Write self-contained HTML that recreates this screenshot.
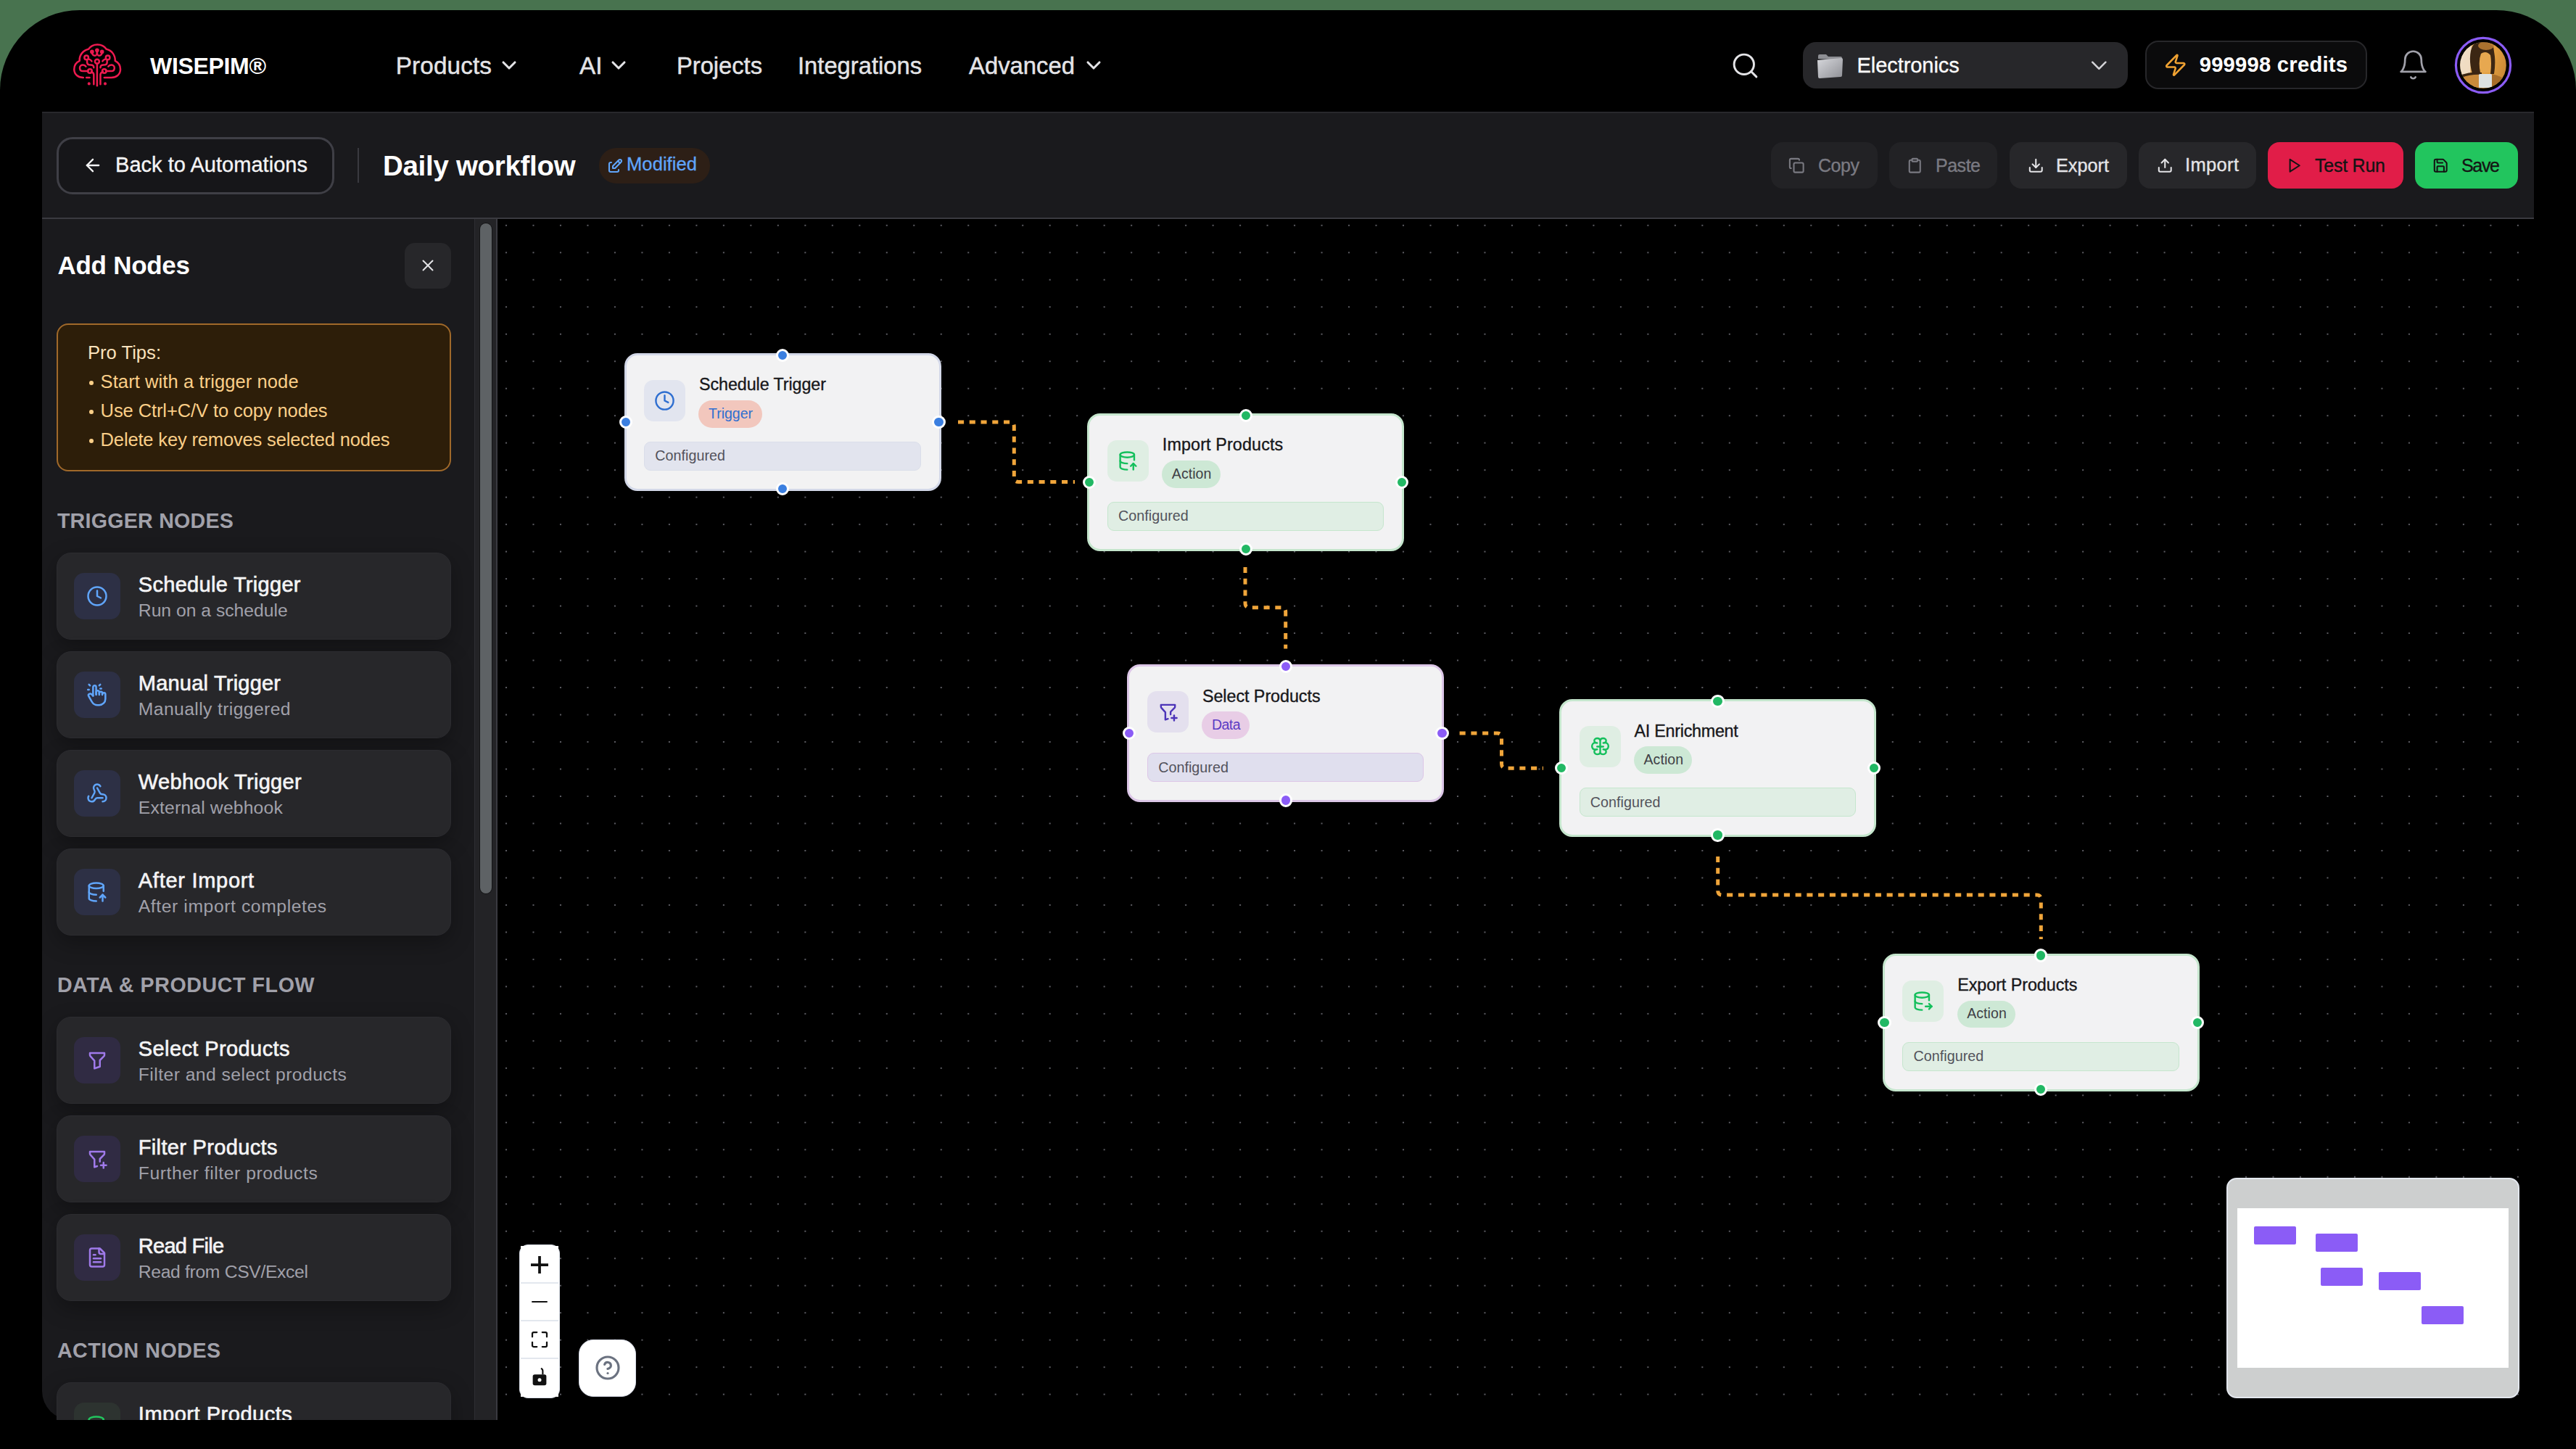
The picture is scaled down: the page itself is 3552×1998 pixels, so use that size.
<!DOCTYPE html>
<html><head><meta charset="utf-8"><style>
html,body{margin:0;padding:0;}
body{width:3552px;height:1998px;overflow:hidden;position:relative;background:#48734f;font-family:"Liberation Sans", sans-serif;}
.a{position:absolute;box-sizing:border-box;}
.t{position:absolute;line-height:1;white-space:nowrap;}
</style></head><body>
<div class="a" style="left:0.0px;top:14.0px;width:3552.0px;height:2386.0px;background:#000;border-radius:110px"></div><svg class="a" style="left:95.0px;top:55.0px;" width="80.0" height="70.0" viewBox="0 0 1656 1449" fill="none"><g stroke="#ee1a50" stroke-width="52" stroke-linecap="round" stroke-linejoin="round" fill="none">
<path d="M410 1075 C270 1075 150 990 150 840 C150 720 220 640 305 600 C290 440 400 300 560 265 C620 175 715 135 815 135 C915 135 1010 175 1070 265 C1230 300 1325 440 1320 600 C1400 640 1470 720 1470 840 C1470 990 1350 1075 1210 1075 L1010 1075"/>
<path d="M500 1075 L590 1075"/>
<path d="M805 680 L805 1310"/>
<circle cx="805" cy="615" r="62"/>
<path d="M710 1270 L710 990 C710 950 680 925 640 910"/>
<circle cx="600" cy="890" r="58"/>
<path d="M900 1270 L900 990 C900 950 930 925 970 910"/>
<circle cx="1010" cy="890" r="58"/>
<path d="M545 890 L400 890 C330 890 310 840 310 800 C310 740 360 715 400 715 C440 715 470 735 485 760"/>
<path d="M1065 890 L1210 890 C1280 890 1300 840 1300 800 C1300 740 1250 715 1210 715 C1170 715 1140 735 1125 760"/>
<circle cx="500" cy="505" r="58"/>
<path d="M520 562 L520 640 C520 690 560 715 620 715 C680 715 710 740 710 790"/>
<path d="M560 545 C610 560 640 580 650 610"/>
<circle cx="1110" cy="505" r="58"/>
<path d="M1090 562 L1090 640 C1090 690 1050 715 990 715 C930 715 900 740 900 790"/>
<path d="M1050 545 C1000 560 970 580 960 610"/>
<path d="M660 360 C670 430 700 450 740 450 C790 450 805 420 805 330"/>
<path d="M945 360 C935 430 905 450 865 450 C815 450 805 420 805 330"/>
<circle cx="660" cy="340" r="32"/><circle cx="805" cy="295" r="32"/><circle cx="945" cy="340" r="32"/>
</g>
<g fill="#e8194f"><circle cx="575" cy="1250" r="42"/><circle cx="1035" cy="1250" r="42"/></g></svg><div class="t" style="left:207.0px;top:75.3px;font-size:32px;font-weight:700;color:#fff;letter-spacing:-0.321px;">WISEPIM®</div><div class="t" style="left:545.7px;top:74.4px;font-size:33.3px;font-weight:400;color:#e4e4e7;letter-spacing:0.128px;-webkit-text-stroke:0.45px #e4e4e7;">Products</div><svg class="a" style="left:686.0px;top:74.0px;" width="32.0" height="32.0" viewBox="0 0 24 24" fill="none"><g stroke="#e4e4e7" stroke-width="2.3" stroke-linecap="round" stroke-linejoin="round"><path d="m6 9 6 6 6-6"/></g></svg><div class="t" style="left:799.0px;top:74.4px;font-size:33.3px;font-weight:400;color:#e4e4e7;-webkit-text-stroke:0.45px #e4e4e7;">AI</div><svg class="a" style="left:836.5px;top:74.0px;" width="32.0" height="32.0" viewBox="0 0 24 24" fill="none"><g stroke="#e4e4e7" stroke-width="2.3" stroke-linecap="round" stroke-linejoin="round"><path d="m6 9 6 6 6-6"/></g></svg><div class="t" style="left:933.0px;top:74.9px;font-size:32.7px;font-weight:400;color:#e4e4e7;letter-spacing:-0.011px;-webkit-text-stroke:0.45px #e4e4e7;">Projects</div><div class="t" style="left:1100.0px;top:74.9px;font-size:32.7px;font-weight:400;color:#e4e4e7;letter-spacing:0.017px;-webkit-text-stroke:0.45px #e4e4e7;">Integrations</div><div class="t" style="left:1336.0px;top:74.8px;font-size:32.8px;font-weight:400;color:#e4e4e7;letter-spacing:0.018px;-webkit-text-stroke:0.45px #e4e4e7;">Advanced</div><svg class="a" style="left:1492.0px;top:74.0px;" width="32.0" height="32.0" viewBox="0 0 24 24" fill="none"><g stroke="#e4e4e7" stroke-width="2.3" stroke-linecap="round" stroke-linejoin="round"><path d="m6 9 6 6 6-6"/></g></svg><svg class="a" style="left:2385.5px;top:70.3px;" width="41.0" height="41.0" viewBox="0 0 24 24" fill="none"><g stroke="#e4e4e7" stroke-width="1.7" stroke-linecap="round" stroke-linejoin="round"><circle cx="11" cy="11" r="8"/><path d="m21 21-4.3-4.3"/></g></svg><div class="a" style="left:2486.0px;top:58.0px;width:448.0px;height:63.7px;background:#27272a;border-radius:18px"></div><svg class="a" style="left:2504.0px;top:71.0px;" width="40.0" height="40.0" viewBox="0 0 40 40" fill="none"><path d="M3 10 L3 6 Q3 4 5 4 L14 4 L17 7 L34 7 Q36 7 36 9 L36 12 Z" fill="#8e8f94"/>
<path d="M2 12 L35 9 Q37 9 37 11 L36 33 Q36 35 34 35 L5 37 Q3 37 3 35 Z" fill="url(#fg)"/>
<defs><linearGradient id="fg" x1="0" y1="0" x2="1" y2="1"><stop offset="0" stop-color="#d7d8dc"/><stop offset="1" stop-color="#8f9096"/></linearGradient></defs></svg><div class="t" style="left:2560.5px;top:75.5px;font-size:29px;font-weight:400;color:#fafafa;letter-spacing:-0.063px;-webkit-text-stroke:0.35px #fafafa;">Electronics</div><svg class="a" style="left:2875.7px;top:71.7px;" width="36.6" height="36.6" viewBox="0 0 24 24" fill="none"><g stroke="#d4d4d8" stroke-width="1.64" stroke-linecap="round" stroke-linejoin="round"><path d="m6 9 6 6 6-6"/></g></svg><div class="a" style="left:2958.0px;top:56.0px;width:306.0px;height:67.3px;background:#0b0b0c;border:2px solid #27272a;border-radius:18px"></div><svg class="a" style="left:2983.4px;top:73.2px;" width="33.5" height="33.5" viewBox="0 0 24 24" fill="none"><g stroke="#f0a232" stroke-width="1.85" stroke-linecap="round" stroke-linejoin="round"><path d="M4 14a1 1 0 0 1-.78-1.63l9.9-10.2a.5.5 0 0 1 .86.46l-1.92 6.02A1 1 0 0 0 13 10h7a1 1 0 0 1 .78 1.63l-9.9 10.2a.5.5 0 0 1-.86-.46l1.92-6.02A1 1 0 0 0 11 14z"/></g></svg><div class="t" style="left:3032.7px;top:75.0px;font-size:29.2px;font-weight:700;color:#fff;letter-spacing:0.236px;">999998 credits</div><svg class="a" style="left:3305.4px;top:67.3px;" width="45.0" height="45.0" viewBox="0 0 24 24" fill="none"><g stroke="#a1a1aa" stroke-width="1.45" stroke-linecap="round" stroke-linejoin="round"><path d="M6 8a6 6 0 0 1 12 0c0 7 3 9 3 9H3s3-2 3-9"/><path d="M10.3 21a1.94 1.94 0 0 0 3.4 0"/></g></svg><svg class="a" style="left:3384.0px;top:50.0px;" width="80.0" height="80.0" viewBox="0 0 80 80" fill="none"><defs><clipPath id="avc"><circle cx="40" cy="40" r="31.8"/></clipPath>
<linearGradient id="avg" x1="0" y1="0" x2="1" y2="0.3"><stop offset="0" stop-color="#f3e6d6"/><stop offset="0.3" stop-color="#e8b56a"/><stop offset="0.7" stop-color="#e39f3f"/><stop offset="1" stop-color="#c98836"/></linearGradient></defs>
<circle cx="40" cy="40" r="37.6" stroke="#8b5cf6" stroke-width="3.2" fill="#000"/>
<g clip-path="url(#avc)"><rect x="0" y="0" width="80" height="80" fill="url(#avg)"/>
<path d="M6 10 L24 10 L22 52 L6 54Z" fill="#f1e3d2" opacity="0.85"/>
<path d="M36 22 Q44 20 51 24 L52 50 L36 50Z" fill="#e7a850"/>
<path d="M30 8 Q42 4 54 14 L56 28 Q57 40 55 52 L50 52 Q52 36 50 26 Q44 19 37 24 Q33 34 36 50 L25 52 Q20 34 23 20 Q25 12 30 8Z" fill="#3b2613"/>
<ellipse cx="44" cy="13" rx="11" ry="6" fill="#b67a33" opacity="0.9"/>
<path d="M8 56 Q22 49 36 51 L36 72 L8 72Z" fill="#c98a3a"/>
<path d="M10 53 Q24 48 38 50 L38 53 Q24 52 10 57Z" fill="#3b2613"/>
<path d="M52 52 Q64 54 72 62 L72 74 L52 74Z" fill="#a86d2a"/>
<rect x="34" y="52" width="18" height="19" rx="1.5" fill="#dde2e3"/></g></svg><div class="a" style="left:58.0px;top:154.0px;width:3436.0px;height:148.0px;background:#1a1a1d;border-top:2px solid #28282c;border-bottom:2px solid #3a3a40"></div><div class="a" style="left:78.0px;top:188.5px;width:383.0px;height:79.2px;border:3px solid #3f3f46;border-radius:22px;background:#161619"></div><svg class="a" style="left:113.5px;top:214.0px;" width="28.0" height="28.0" viewBox="0 0 24 24" fill="none"><g stroke="#f4f4f5" stroke-width="2" stroke-linecap="round" stroke-linejoin="round"><path d="m12 19-7-7 7-7"/><path d="M19 12H5"/></g></svg><div class="t" style="left:159.0px;top:213.2px;font-size:29px;font-weight:400;color:#f4f4f5;letter-spacing:0.035px;-webkit-text-stroke:0.35px #f4f4f5;">Back to Automations</div><div class="a" style="left:492.5px;top:204.0px;width:2.0px;height:48.0px;background:#3a3a40"></div><div class="t" style="left:528.0px;top:210.2px;font-size:38.5px;font-weight:700;color:#fff;letter-spacing:-0.305px;">Daily workflow</div><div class="a" style="left:826.4px;top:204.0px;width:152.6px;height:49.0px;background:#2d1f16;border-radius:24px"></div><svg class="a" style="left:835.5px;top:216.5px;" width="24.0" height="24.0" viewBox="0 0 24 24" fill="none"><g stroke="#60a5fa" stroke-width="2.1" stroke-linecap="round" stroke-linejoin="round"><path d="M7 7h-1a2 2 0 0 0-2 2v9a2 2 0 0 0 2 2h9a2 2 0 0 0 2-2v-1"/><path d="M20.385 6.585a2.1 2.1 0 0 0-2.97-2.97l-8.415 8.385v3h3l8.385-8.415z"/><path d="M16 5l3 3"/></g></svg><div class="t" style="left:864.0px;top:213.8px;font-size:25.6px;font-weight:400;color:#60a5fa;letter-spacing:0.036px;-webkit-text-stroke:0.3px #60a5fa;">Modified</div><div class="a" style="left:2441.6px;top:195.8px;width:147.1px;height:63.9px;background:#222225;border-radius:16px;"></div><svg class="a" style="left:2466.2px;top:216.6px;" width="22.5" height="22.5" viewBox="0 0 24 24" fill="none"><g stroke="#7a7a82" stroke-width="2.2" stroke-linecap="round" stroke-linejoin="round"><rect x="8" y="8" width="14" height="14" rx="2"/><path d="M4 16c-1.1 0-2-.9-2-2V4c0-1.1.9-2 2-2h10c1.1 0 2 .9 2 2"/></g></svg><div class="t" style="left:2507.0px;top:215.7px;font-size:25px;font-weight:400;color:#7a7a82;letter-spacing:-0.458px;-webkit-text-stroke:0.35px #7a7a82;">Copy</div><div class="a" style="left:2605.0px;top:195.8px;width:149.0px;height:63.9px;background:#222225;border-radius:16px;"></div><svg class="a" style="left:2629.2px;top:216.6px;" width="22.5" height="22.5" viewBox="0 0 24 24" fill="none"><g stroke="#7a7a82" stroke-width="2.2" stroke-linecap="round" stroke-linejoin="round"><rect x="8" y="2" width="8" height="4" rx="1"/><path d="M16 4h2a2 2 0 0 1 2 2v14a2 2 0 0 1-2 2H6a2 2 0 0 1-2-2V6a2 2 0 0 1 2-2h2"/></g></svg><div class="t" style="left:2669.0px;top:215.7px;font-size:25px;font-weight:400;color:#7a7a82;letter-spacing:-0.484px;-webkit-text-stroke:0.35px #7a7a82;">Paste</div><div class="a" style="left:2771.0px;top:195.8px;width:162.0px;height:63.9px;background:#27272a;border-radius:16px;"></div><svg class="a" style="left:2796.2px;top:216.6px;" width="22.5" height="22.5" viewBox="0 0 24 24" fill="none"><g stroke="#e4e4e7" stroke-width="2.2" stroke-linecap="round" stroke-linejoin="round"><path d="M21 15v4a2 2 0 0 1-2 2H5a2 2 0 0 1-2-2v-4"/><polyline points="7 10 12 15 17 10"/><line x1="12" y1="15" x2="12" y2="3"/></g></svg><div class="t" style="left:2835.0px;top:215.5px;font-size:25.3px;font-weight:400;color:#e4e4e7;letter-spacing:-0.025px;-webkit-text-stroke:0.35px #e4e4e7;">Export</div><div class="a" style="left:2949.0px;top:195.8px;width:162.0px;height:63.9px;background:#27272a;border-radius:16px;"></div><svg class="a" style="left:2973.8px;top:216.6px;" width="22.5" height="22.5" viewBox="0 0 24 24" fill="none"><g stroke="#e4e4e7" stroke-width="2.2" stroke-linecap="round" stroke-linejoin="round"><path d="M21 15v4a2 2 0 0 1-2 2H5a2 2 0 0 1-2-2v-4"/><polyline points="17 8 12 3 7 8"/><line x1="12" y1="3" x2="12" y2="15"/></g></svg><div class="t" style="left:3013.0px;top:215.3px;font-size:25.5px;font-weight:400;color:#e4e4e7;letter-spacing:0.344px;-webkit-text-stroke:0.35px #e4e4e7;">Import</div><div class="a" style="left:3126.6px;top:195.8px;width:187.4px;height:63.9px;background:#e11d48;border-radius:16px;"></div><svg class="a" style="left:3151.8px;top:216.6px;" width="22.5" height="22.5" viewBox="0 0 24 24" fill="none"><g stroke="#141414" stroke-width="2.2" stroke-linecap="round" stroke-linejoin="round"><polygon points="6 3 20 12 6 21 6 3"/></g></svg><div class="t" style="left:3192.0px;top:215.7px;font-size:25px;font-weight:400;color:#141414;letter-spacing:-0.239px;-webkit-text-stroke:0.35px #141414;">Test Run</div><div class="a" style="left:3329.7px;top:195.8px;width:142.0px;height:63.9px;background:#22c55e;border-radius:16px;"></div><svg class="a" style="left:3354.2px;top:216.6px;" width="22.5" height="22.5" viewBox="0 0 24 24" fill="none"><g stroke="#141414" stroke-width="2.2" stroke-linecap="round" stroke-linejoin="round"><path d="M15.2 3a2 2 0 0 1 1.4.6l3.8 3.8a2 2 0 0 1 .6 1.4V19a2 2 0 0 1-2 2H5a2 2 0 0 1-2-2V5a2 2 0 0 1 2-2z"/><path d="M17 21v-7a1 1 0 0 0-1-1H8a1 1 0 0 0-1 1v7"/><path d="M7 3v4a1 1 0 0 0 1 1h7"/></g></svg><div class="t" style="left:3394.0px;top:215.7px;font-size:25px;font-weight:400;color:#141414;letter-spacing:-1.328px;-webkit-text-stroke:0.35px #141414;">Save</div><div class="a" style="left:58.0px;top:302.0px;width:596.0px;height:1656.0px;background:#1a1a1d;border-bottom-left-radius:40px"></div><div class="a" style="left:654.0px;top:302.0px;width:32.0px;height:1656.0px;background:#232326;border-left:1px solid #2e2e33;border-right:2px solid #3a3a40"></div><div class="a" style="left:662.0px;top:307.6px;width:16.0px;height:924.4px;background:#5e6265;border-radius:8px;box-shadow:0 0 0 1px #141416"></div><div class="t" style="left:79.5px;top:348.4px;font-size:35px;font-weight:700;color:#fff;letter-spacing:-0.279px;">Add Nodes</div><div class="a" style="left:558.0px;top:334.5px;width:63.6px;height:63.5px;background:#27272a;border-radius:14px"></div><svg class="a" style="left:577.0px;top:353.0px;" width="26.0" height="26.0" viewBox="0 0 24 24" fill="none"><g stroke="#e4e4e7" stroke-width="1.8" stroke-linecap="round" stroke-linejoin="round"><path d="M18 6 6 18"/><path d="m6 6 12 12"/></g></svg><div class="a" style="left:78.0px;top:446.0px;width:543.6px;height:203.7px;background:#2d1e09;border:2px solid #a0692a;border-radius:16px"></div><div class="t" style="left:121.0px;top:474.3px;font-size:25.6px;font-weight:400;color:#fbe3bd;">Pro Tips:</div><div class="a" style="left:122.8px;top:525.4px;width:5.8px;height:5.8px;background:#fbcf88;border-radius:50%"></div><div class="t" style="left:138.6px;top:514.4px;font-size:25.5px;font-weight:400;color:#fbcf88;letter-spacing:0.094px;">Start with a trigger node</div><div class="a" style="left:122.8px;top:565.1px;width:5.8px;height:5.8px;background:#fbcf88;border-radius:50%"></div><div class="t" style="left:138.6px;top:554.2px;font-size:25.5px;font-weight:400;color:#fbcf88;letter-spacing:-0.094px;">Use Ctrl+C/V to copy nodes</div><div class="a" style="left:122.8px;top:604.9px;width:5.8px;height:5.8px;background:#fbcf88;border-radius:50%"></div><div class="t" style="left:138.6px;top:593.9px;font-size:25.5px;font-weight:400;color:#fbcf88;letter-spacing:-0.155px;">Delete key removes selected nodes</div><div class="t" style="left:78.9px;top:703.6px;font-size:28.6px;font-weight:700;color:#a1a1aa;letter-spacing:0.258px;">TRIGGER NODES</div><div class="a" style="left:78.3px;top:762.0px;width:543.5px;height:119.5px;background:#27272a;border-radius:20px;border:1px solid #2c2c30;box-shadow:0 10px 30px rgba(0,0,0,0.3)"></div><div class="a" style="left:102.0px;top:790.0px;width:63.8px;height:64.0px;background:#2d3045;border-radius:14px"></div><svg class="a" style="left:119.0px;top:807.0px;" width="30.0" height="30.0" viewBox="0 0 24 24" fill="none"><g stroke="#60a5fa" stroke-width="2" stroke-linecap="round" stroke-linejoin="round"><circle cx="12" cy="12" r="10"/><polyline points="12 6 12 12 16 14"/></g></svg><div class="t" style="left:190.8px;top:791.7px;font-size:29px;font-weight:400;color:#f4f4f5;letter-spacing:0.297px;-webkit-text-stroke:0.65px #f4f4f5;">Schedule Trigger</div><div class="t" style="left:190.8px;top:829.7px;font-size:24.7px;font-weight:400;color:#a1a1aa;letter-spacing:0.007px;">Run on a schedule</div><div class="a" style="left:78.3px;top:898.0px;width:543.5px;height:119.5px;background:#27272a;border-radius:20px;border:1px solid #2c2c30;box-shadow:0 10px 30px rgba(0,0,0,0.3)"></div><div class="a" style="left:102.0px;top:926.0px;width:63.8px;height:64.0px;background:#2d3045;border-radius:14px"></div><svg class="a" style="left:117.0px;top:941.0px;" width="34.0" height="34.0" viewBox="0 0 24 24" fill="none"><g stroke="#60a5fa" stroke-width="1.8" stroke-linecap="round" stroke-linejoin="round"><path d="M8 13v-8.5a1.5 1.5 0 0 1 3 0v7.5"/><path d="M11 11.5v-2a1.5 1.5 0 0 1 3 0v2.5"/><path d="M14 10.5a1.5 1.5 0 0 1 3 0v1.5"/><path d="M17 11.5a1.5 1.5 0 0 1 3 0v4.5a6 6 0 0 1-6 6h-2h.208a6 6 0 0 1-5.012-2.7l-.196-.3c-.312-.479-1.407-2.388-3.286-5.728a1.5 1.5 0 0 1 .536-2.022a1.867 1.867 0 0 1 2.28.28l1.47 1.47"/><path d="M5 3l-1-1"/><path d="M4 7h-1"/><path d="M14 3l1-1"/><path d="M15 6h1"/></g></svg><div class="t" style="left:190.8px;top:927.7px;font-size:29px;font-weight:400;color:#f4f4f5;letter-spacing:0.212px;-webkit-text-stroke:0.65px #f4f4f5;">Manual Trigger</div><div class="t" style="left:190.8px;top:965.7px;font-size:24.7px;font-weight:400;color:#a1a1aa;letter-spacing:0.394px;">Manually triggered</div><div class="a" style="left:78.3px;top:1034.0px;width:543.5px;height:119.5px;background:#27272a;border-radius:20px;border:1px solid #2c2c30;box-shadow:0 10px 30px rgba(0,0,0,0.3)"></div><div class="a" style="left:102.0px;top:1062.0px;width:63.8px;height:64.0px;background:#2d3045;border-radius:14px"></div><svg class="a" style="left:119.0px;top:1079.0px;" width="30.0" height="30.0" viewBox="0 0 24 24" fill="none"><g stroke="#60a5fa" stroke-width="2" stroke-linecap="round" stroke-linejoin="round"><path d="M18 16.98h-5.99c-1.1 0-1.95.94-2.48 1.9A4 4 0 0 1 2 17c.01-.7.2-1.4.57-2"/><path d="m6 17 3.13-5.78c.53-.97.1-2.18-.5-3.1a4 4 0 1 1 6.89-4.06"/><path d="m12 6 3.13 5.73C15.66 12.7 16.9 13 18 13a4 4 0 0 1 0 8"/></g></svg><div class="t" style="left:190.8px;top:1063.7px;font-size:29px;font-weight:400;color:#f4f4f5;letter-spacing:0.328px;-webkit-text-stroke:0.65px #f4f4f5;">Webhook Trigger</div><div class="t" style="left:190.8px;top:1101.7px;font-size:24.7px;font-weight:400;color:#a1a1aa;letter-spacing:0.183px;">External webhook</div><div class="a" style="left:78.3px;top:1170.0px;width:543.5px;height:119.5px;background:#27272a;border-radius:20px;border:1px solid #2c2c30;box-shadow:0 10px 30px rgba(0,0,0,0.3)"></div><div class="a" style="left:102.0px;top:1198.0px;width:63.8px;height:64.0px;background:#2d3045;border-radius:14px"></div><svg class="a" style="left:119.0px;top:1215.0px;" width="30.0" height="30.0" viewBox="0 0 24 24" fill="none"><g stroke="#60a5fa" stroke-width="2" stroke-linecap="round" stroke-linejoin="round"><ellipse cx="11" cy="5" rx="8" ry="3"/><path d="M3 5v14c0 1.66 3.6 3 8 3"/><path d="M19 5v6"/><path d="M3 12c0 1.66 3.6 3 8 3"/><path d="M18 22v-7"/><path d="m15 18 3-3 3 3"/></g></svg><div class="t" style="left:190.8px;top:1199.7px;font-size:29px;font-weight:400;color:#f4f4f5;letter-spacing:0.718px;-webkit-text-stroke:0.65px #f4f4f5;">After Import</div><div class="t" style="left:190.8px;top:1237.7px;font-size:24.7px;font-weight:400;color:#a1a1aa;letter-spacing:0.592px;">After import completes</div><div class="t" style="left:78.9px;top:1344.2px;font-size:28.6px;font-weight:700;color:#a1a1aa;letter-spacing:0.581px;">DATA &amp; PRODUCT FLOW</div><div class="a" style="left:78.3px;top:1402.0px;width:543.5px;height:119.5px;background:#27272a;border-radius:20px;border:1px solid #2c2c30;box-shadow:0 10px 30px rgba(0,0,0,0.3)"></div><div class="a" style="left:102.0px;top:1430.0px;width:63.8px;height:64.0px;background:#302b43;border-radius:14px"></div><svg class="a" style="left:119.0px;top:1447.0px;" width="30.0" height="30.0" viewBox="0 0 24 24" fill="none"><g stroke="#9f7aea" stroke-width="2" stroke-linecap="round" stroke-linejoin="round"><path d="M4 4h16v2.172a2 2 0 0 1-.586 1.414l-4.414 4.414v7l-6 2v-8.5l-4.48-4.928a2 2 0 0 1-.52-1.345v-2.227z"/></g></svg><div class="t" style="left:190.8px;top:1431.7px;font-size:29px;font-weight:400;color:#f4f4f5;letter-spacing:0.399px;-webkit-text-stroke:0.65px #f4f4f5;">Select Products</div><div class="t" style="left:190.8px;top:1469.7px;font-size:24.7px;font-weight:400;color:#a1a1aa;letter-spacing:0.448px;">Filter and select products</div><div class="a" style="left:78.3px;top:1538.0px;width:543.5px;height:119.5px;background:#27272a;border-radius:20px;border:1px solid #2c2c30;box-shadow:0 10px 30px rgba(0,0,0,0.3)"></div><div class="a" style="left:102.0px;top:1566.0px;width:63.8px;height:64.0px;background:#302b43;border-radius:14px"></div><svg class="a" style="left:119.0px;top:1583.0px;" width="30.0" height="30.0" viewBox="0 0 24 24" fill="none"><g stroke="#9f7aea" stroke-width="2" stroke-linecap="round" stroke-linejoin="round"><path d="M12 20l-3 1v-8.5l-4.48-4.928a2 2 0 0 1-.52-1.345v-2.227h16v2.172a2 2 0 0 1-.586 1.414l-4.414 4.414v3"/><path d="M16 19h6"/><path d="M19 16v6"/></g></svg><div class="t" style="left:190.8px;top:1567.7px;font-size:29px;font-weight:400;color:#f4f4f5;letter-spacing:0.332px;-webkit-text-stroke:0.65px #f4f4f5;">Filter Products</div><div class="t" style="left:190.8px;top:1605.7px;font-size:24.7px;font-weight:400;color:#a1a1aa;letter-spacing:0.562px;">Further filter products</div><div class="a" style="left:78.3px;top:1674.0px;width:543.5px;height:119.5px;background:#27272a;border-radius:20px;border:1px solid #2c2c30;box-shadow:0 10px 30px rgba(0,0,0,0.3)"></div><div class="a" style="left:102.0px;top:1702.0px;width:63.8px;height:64.0px;background:#302b43;border-radius:14px"></div><svg class="a" style="left:119.0px;top:1719.0px;" width="30.0" height="30.0" viewBox="0 0 24 24" fill="none"><g stroke="#9f7aea" stroke-width="2" stroke-linecap="round" stroke-linejoin="round"><path d="M15 2H6a2 2 0 0 0-2 2v16a2 2 0 0 0 2 2h12a2 2 0 0 0 2-2V7Z"/><path d="M14 2v4a2 2 0 0 0 2 2h4"/><path d="M10 9H8"/><path d="M16 13H8"/><path d="M16 17H8"/></g></svg><div class="t" style="left:190.8px;top:1703.7px;font-size:29px;font-weight:400;color:#f4f4f5;letter-spacing:-0.728px;-webkit-text-stroke:0.65px #f4f4f5;">Read File</div><div class="t" style="left:190.8px;top:1741.7px;font-size:24.7px;font-weight:400;color:#a1a1aa;letter-spacing:-0.328px;">Read from CSV/Excel</div><div class="t" style="left:78.9px;top:1848.4px;font-size:28.6px;font-weight:700;color:#a1a1aa;letter-spacing:0.542px;">ACTION NODES</div><div class="a" style="left:78.3px;top:1906.0px;width:543.5px;height:119.5px;background:#27272a;border-radius:20px;border:1px solid #2c2c30;box-shadow:0 10px 30px rgba(0,0,0,0.3)"></div><div class="a" style="left:102.0px;top:1934.0px;width:63.8px;height:64.0px;background:#2d3330;border-radius:14px"></div><svg class="a" style="left:119.0px;top:1951.0px;" width="30.0" height="30.0" viewBox="0 0 24 24" fill="none"><g stroke="#22c55e" stroke-width="2" stroke-linecap="round" stroke-linejoin="round"><ellipse cx="11" cy="5" rx="8" ry="3"/><path d="M3 5v14c0 1.66 3.6 3 8 3"/><path d="M19 5v6"/><path d="M3 12c0 1.66 3.6 3 8 3"/><path d="M18 22v-7"/><path d="m15 18 3-3 3 3"/></g></svg><div class="t" style="left:190.8px;top:1935.7px;font-size:29px;font-weight:400;color:#f4f4f5;letter-spacing:0.522px;-webkit-text-stroke:0.65px #f4f4f5;">Import Products</div><div class="t" style="left:190.8px;top:1973.7px;font-size:24.7px;font-weight:400;color:#a1a1aa;">Import products</div><div class="a" style="left:0.0px;top:1958.0px;width:686.0px;height:40.0px;background:#000"></div><div class="a" style="left:686.0px;top:302.0px;width:2808.0px;height:1656.0px;background:#000"></div><svg class="a" style="left:686px;top:302px" width="2808" height="1656"><defs><pattern id="dots" x="-6.74" y="-9.94" width="37.485" height="37.485" patternUnits="userSpaceOnUse"><circle cx="18.74" cy="18.74" r="1.1" fill="#707078"/></pattern></defs><rect width="2808" height="1656" fill="url(#dots)"/></svg><svg class="a" style="left:0;top:0" width="3552" height="1998"><path d="M1321 582 L1392.3 582 Q1398.3 582 1398.3 588 L1398.3 658.5 Q1398.3 664.5 1404.3 664.5 L1482 664.5" stroke="#f0a53a" stroke-width="5" fill="none" stroke-dasharray="8.1 7.65" stroke-dashoffset="0"/><path d="M1717 782 L1717 831.7 Q1717 837.7 1723 837.7 L1766.7 837.7 Q1772.7 837.7 1772.7 843.7 L1772.7 894.5" stroke="#f0a53a" stroke-width="5" fill="none" stroke-dasharray="8.1 7.65" stroke-dashoffset="0"/><path d="M2012.6 1011 L2064.5 1011 Q2070.5 1011 2070.5 1017 L2070.5 1053.3 Q2070.5 1059.3 2076.5 1059.3 L2128 1059.3" stroke="#f0a53a" stroke-width="5" fill="none" stroke-dasharray="8.1 7.65" stroke-dashoffset="0"/><path d="M2368.7 1181 L2368.7 1228.1 Q2368.7 1234.1 2374.7 1234.1 L2808.3 1234.1 Q2814.3 1234.1 2814.3 1240.1 L2814.3 1295" stroke="#f0a53a" stroke-width="5" fill="none" stroke-dasharray="8.1 7.65" stroke-dashoffset="0"/></svg><div class="a" style="left:860.5px;top:487.0px;width:437.0px;height:190.0px;background:#f2f2f3;border:3px solid #d3d8e8;border-radius:18px"></div><div class="a" style="left:888.0px;top:524.0px;width:57.0px;height:57.0px;background:#e2e5ef;border-radius:13px"></div><svg class="a" style="left:902.0px;top:538.0px;" width="29.0" height="29.0" viewBox="0 0 24 24" fill="none"><g stroke="#2f6fd0" stroke-width="2" stroke-linecap="round" stroke-linejoin="round"><circle cx="12" cy="12" r="10"/><polyline points="12 6 12 12 16 14"/></g></svg><div class="t" style="left:964.0px;top:519.3px;font-size:23.3px;font-weight:400;color:#18181b;letter-spacing:-0.076px;-webkit-text-stroke:0.35px #18181b;">Schedule Trigger</div><div class="a" style="left:963.3px;top:552.0px;width:88.0px;height:37.6px;background:#f2c7bd;border-radius:19px"></div><div class="t" style="left:977.0px;top:560.5px;font-size:19.5px;font-weight:400;color:#2f6fd0;letter-spacing:-0.008px;">Trigger</div><div class="a" style="left:888.0px;top:608.8px;width:381.5px;height:40.2px;background:#e2e4ee;border:1.5px solid #dadeea;border-radius:9px"></div><div class="t" style="left:903.3px;top:619.3px;font-size:19.7px;font-weight:400;color:#52525b;letter-spacing:0.041px;">Configured</div><div class="a" style="left:1069.8px;top:480.6px;width:18.4px;height:18.4px;background:#3b7fe0;border:3px solid #fff;border-radius:50%"></div><div class="a" style="left:854.1px;top:572.8px;width:18.4px;height:18.4px;background:#3b7fe0;border:3px solid #fff;border-radius:50%"></div><div class="a" style="left:1285.3px;top:572.8px;width:18.4px;height:18.4px;background:#3b7fe0;border:3px solid #fff;border-radius:50%"></div><div class="a" style="left:1069.8px;top:665.0px;width:18.4px;height:18.4px;background:#3b7fe0;border:3px solid #fff;border-radius:50%"></div><div class="a" style="left:1499.3px;top:570.0px;width:437.0px;height:190.0px;background:#f2f2f3;border:3px solid #c5e6cd;border-radius:18px"></div><div class="a" style="left:1526.8px;top:607.0px;width:57.0px;height:57.0px;background:#dfeee3;border-radius:13px"></div><svg class="a" style="left:1540.8px;top:621.0px;" width="29.0" height="29.0" viewBox="0 0 24 24" fill="none"><g stroke="#14bf5c" stroke-width="2" stroke-linecap="round" stroke-linejoin="round"><ellipse cx="11" cy="5" rx="8" ry="3"/><path d="M3 5v14c0 1.66 3.6 3 8 3"/><path d="M19 5v6"/><path d="M3 12c0 1.66 3.6 3 8 3"/><path d="M18 22v-7"/><path d="m15 18 3-3 3 3"/></g></svg><div class="t" style="left:1602.8px;top:602.3px;font-size:23.3px;font-weight:400;color:#18181b;letter-spacing:0.140px;-webkit-text-stroke:0.35px #18181b;">Import Products</div><div class="a" style="left:1602.1px;top:635.0px;width:80.7px;height:37.6px;background:#cde8d5;border-radius:19px"></div><div class="t" style="left:1615.8px;top:643.5px;font-size:19.5px;font-weight:400;color:#3f3f46;letter-spacing:0.079px;">Action</div><div class="a" style="left:1526.8px;top:691.8px;width:381.5px;height:40.2px;background:#e0eee4;border:1.5px solid #c5e6cd;border-radius:9px"></div><div class="t" style="left:1542.1px;top:702.3px;font-size:19.7px;font-weight:400;color:#52525b;letter-spacing:0.041px;">Configured</div><div class="a" style="left:1708.6px;top:563.6px;width:18.4px;height:18.4px;background:#22b864;border:3px solid #fff;border-radius:50%"></div><div class="a" style="left:1492.9px;top:655.8px;width:18.4px;height:18.4px;background:#22b864;border:3px solid #fff;border-radius:50%"></div><div class="a" style="left:1924.1px;top:655.8px;width:18.4px;height:18.4px;background:#22b864;border:3px solid #fff;border-radius:50%"></div><div class="a" style="left:1708.6px;top:748.0px;width:18.4px;height:18.4px;background:#22b864;border:3px solid #fff;border-radius:50%"></div><div class="a" style="left:1554.4px;top:916.3px;width:437.0px;height:190.0px;background:#f2f2f3;border:3px solid #dcc6e7;border-radius:18px"></div><div class="a" style="left:1581.9px;top:953.3px;width:57.0px;height:57.0px;background:#e4e0ee;border-radius:13px"></div><svg class="a" style="left:1595.9px;top:967.3px;" width="29.0" height="29.0" viewBox="0 0 24 24" fill="none"><g stroke="#4c34b8" stroke-width="2" stroke-linecap="round" stroke-linejoin="round"><path d="M12 20l-3 1v-8.5l-4.48-4.928a2 2 0 0 1-.52-1.345v-2.227h16v2.172a2 2 0 0 1-.586 1.414l-4.414 4.414v3"/><path d="M16 19h6"/><path d="M19 16v6"/></g></svg><div class="t" style="left:1657.9px;top:948.6px;font-size:23.3px;font-weight:400;color:#18181b;letter-spacing:-0.034px;-webkit-text-stroke:0.35px #18181b;">Select Products</div><div class="a" style="left:1657.2px;top:981.3px;width:65.8px;height:37.6px;background:#e8cde6;border-radius:19px"></div><div class="t" style="left:1670.9px;top:989.8px;font-size:19.5px;font-weight:400;color:#5b3cc4;letter-spacing:-0.534px;">Data</div><div class="a" style="left:1581.9px;top:1038.1px;width:381.5px;height:40.2px;background:#e0dfee;border:1.5px solid #dcc6e7;border-radius:9px"></div><div class="t" style="left:1597.2px;top:1048.6px;font-size:19.7px;font-weight:400;color:#52525b;letter-spacing:0.041px;">Configured</div><div class="a" style="left:1763.7px;top:909.9px;width:18.4px;height:18.4px;background:#8b5cf6;border:3px solid #fff;border-radius:50%"></div><div class="a" style="left:1548.0px;top:1002.1px;width:18.4px;height:18.4px;background:#8b5cf6;border:3px solid #fff;border-radius:50%"></div><div class="a" style="left:1979.2px;top:1002.1px;width:18.4px;height:18.4px;background:#8b5cf6;border:3px solid #fff;border-radius:50%"></div><div class="a" style="left:1763.7px;top:1094.3px;width:18.4px;height:18.4px;background:#8b5cf6;border:3px solid #fff;border-radius:50%"></div><div class="a" style="left:2150.0px;top:964.2px;width:437.0px;height:190.0px;background:#f2f2f3;border:3px solid #c5e6cd;border-radius:18px"></div><div class="a" style="left:2177.5px;top:1001.2px;width:57.0px;height:57.0px;background:#dfeee3;border-radius:13px"></div><svg class="a" style="left:2191.5px;top:1015.2px;" width="29.0" height="29.0" viewBox="0 0 24 24" fill="none"><g stroke="#14bf5c" stroke-width="2" stroke-linecap="round" stroke-linejoin="round"><path d="M 12.00 4.50 C 11.35 3.00 10.05 2.50 8.75 2.50 C 6.80 2.50 5.24 3.70 5.24 5.30 C 5.24 6.20 5.89 7.00 6.67 7.50 C 4.07 7.60 2.64 9.50 2.64 11.50 C 2.64 13.50 4.20 15.20 6.67 15.50 C 5.89 16.00 5.24 16.80 5.24 17.80 C 5.24 19.50 6.80 20.80 8.88 20.80 C 10.18 20.80 11.35 20.30 12.00 19.50"/><path d="M 12.00 4.50 C 12.65 3.00 13.95 2.50 15.25 2.50 C 17.20 2.50 18.76 3.70 18.76 5.30 C 18.76 6.20 18.11 7.00 17.33 7.50 C 19.93 7.60 21.36 9.50 21.36 11.50 C 21.36 13.50 19.80 15.20 17.33 15.50 C 18.11 16.00 18.76 16.80 18.76 17.80 C 18.76 19.50 17.20 20.80 15.12 20.80 C 13.82 20.80 12.65 20.30 12.00 19.50"/><path d="M 12.00 4.50 V 19.50"/><path d="M 8.49 12.00 H 15.51"/><path d="M 6.67 7.50 L 8.49 7.90"/><path d="M 17.33 7.50 L 15.51 7.90"/><path d="M 6.67 15.50 L 8.49 15.10"/><path d="M 17.33 15.50 L 15.51 15.10"/></g></svg><div class="t" style="left:2253.5px;top:996.5px;font-size:23.3px;font-weight:400;color:#18181b;letter-spacing:-0.251px;-webkit-text-stroke:0.35px #18181b;">AI Enrichment</div><div class="a" style="left:2252.8px;top:1029.2px;width:80.7px;height:37.6px;background:#cde8d5;border-radius:19px"></div><div class="t" style="left:2266.5px;top:1037.7px;font-size:19.5px;font-weight:400;color:#3f3f46;letter-spacing:0.079px;">Action</div><div class="a" style="left:2177.5px;top:1086.0px;width:381.5px;height:40.2px;background:#e0eee4;border:1.5px solid #c5e6cd;border-radius:9px"></div><div class="t" style="left:2192.8px;top:1096.5px;font-size:19.7px;font-weight:400;color:#52525b;letter-spacing:0.041px;">Configured</div><div class="a" style="left:2359.3px;top:957.8px;width:18.4px;height:18.4px;background:#22b864;border:3px solid #fff;border-radius:50%"></div><div class="a" style="left:2143.6px;top:1050.0px;width:18.4px;height:18.4px;background:#22b864;border:3px solid #fff;border-radius:50%"></div><div class="a" style="left:2574.8px;top:1050.0px;width:18.4px;height:18.4px;background:#22b864;border:3px solid #fff;border-radius:50%"></div><div class="a" style="left:2359.3px;top:1142.2px;width:18.4px;height:18.4px;background:#22b864;border:3px solid #fff;border-radius:50%"></div><div class="a" style="left:2595.7px;top:1314.7px;width:437.0px;height:190.0px;background:#f2f2f3;border:3px solid #c5e6cd;border-radius:18px"></div><div class="a" style="left:2623.2px;top:1351.7px;width:57.0px;height:57.0px;background:#dfeee3;border-radius:13px"></div><svg class="a" style="left:2637.2px;top:1365.7px;" width="29.0" height="29.0" viewBox="0 0 24 24" fill="none"><g stroke="#14bf5c" stroke-width="2" stroke-linecap="round" stroke-linejoin="round"><ellipse cx="11" cy="5" rx="8" ry="3"/><path d="M3 5v14c0 1.66 3.6 3 8 3"/><path d="M19 5v6"/><path d="M3 12c0 1.66 3.6 3 8 3"/><path d="M15 18h7"/><path d="m19 15 3 3-3 3"/></g></svg><div class="t" style="left:2699.2px;top:1347.0px;font-size:23.3px;font-weight:400;color:#18181b;letter-spacing:-0.039px;-webkit-text-stroke:0.35px #18181b;">Export Products</div><div class="a" style="left:2698.5px;top:1379.7px;width:80.7px;height:37.6px;background:#cde8d5;border-radius:19px"></div><div class="t" style="left:2712.2px;top:1388.2px;font-size:19.5px;font-weight:400;color:#3f3f46;letter-spacing:0.079px;">Action</div><div class="a" style="left:2623.2px;top:1436.5px;width:381.5px;height:40.2px;background:#e0eee4;border:1.5px solid #c5e6cd;border-radius:9px"></div><div class="t" style="left:2638.5px;top:1447.0px;font-size:19.7px;font-weight:400;color:#52525b;letter-spacing:0.041px;">Configured</div><div class="a" style="left:2805.0px;top:1308.3px;width:18.4px;height:18.4px;background:#22b864;border:3px solid #fff;border-radius:50%"></div><div class="a" style="left:2589.3px;top:1400.5px;width:18.4px;height:18.4px;background:#22b864;border:3px solid #fff;border-radius:50%"></div><div class="a" style="left:3020.5px;top:1400.5px;width:18.4px;height:18.4px;background:#22b864;border:3px solid #fff;border-radius:50%"></div><div class="a" style="left:2805.0px;top:1492.7px;width:18.4px;height:18.4px;background:#22b864;border:3px solid #fff;border-radius:50%"></div><div class="a" style="left:716.0px;top:1716.0px;width:55.6px;height:211.6px;background:#fff;border:1.5px solid #dce1ea;border-radius:12px"></div><div class="a" style="left:717.8px;top:1718.0px;width:52.0px;height:208.0px;background:#fff"></div><div class="a" style="left:718.0px;top:1767.8px;width:52.0px;height:2.0px;background:#e3e7ee"></div><div class="a" style="left:718.0px;top:1820.0px;width:52.0px;height:2.0px;background:#e3e7ee"></div><div class="a" style="left:718.0px;top:1872.0px;width:52.0px;height:2.0px;background:#e3e7ee"></div><svg class="a" style="left:729.0px;top:1729.0px;" width="30.0" height="30.0" viewBox="0 0 24 24" fill="none"><path d="M12 2.4v19.2M2.4 12h19.2" stroke="#111" stroke-width="3"/></svg><svg class="a" style="left:729.0px;top:1780.0px;" width="30.0" height="30.0" viewBox="0 0 24 24" fill="none"><g stroke="#111" stroke-width="1.6" stroke-linecap="round" stroke-linejoin="round"><path d="M4 12h16"/></g></svg><svg class="a" style="left:729.0px;top:1832.0px;" width="30.0" height="30.0" viewBox="0 0 24 24" fill="none"><g stroke="#111" stroke-width="1.8" stroke-linecap="round" stroke-linejoin="round"><path d="M4 9V5.5Q4 4 5.5 4H9M15 4h3.5Q20 4 20 5.5V9M20 15v3.5Q20 20 18.5 20H15M9 20H5.5Q4 20 4 18.5V15"/></g></svg><svg class="a" style="left:729.0px;top:1882.0px;" width="30.0" height="30.0" viewBox="0 0 24 24" fill="none"><rect x="4.5" y="10.5" width="15" height="12" rx="2.2" fill="#111"/><circle cx="12" cy="16.5" r="2" fill="#fff"/><path d="M15.5 10.5V6.5a2.6 2.6 0 0 0-2-2.5" stroke="#111" stroke-width="1.7" fill="none"/></svg><div class="a" style="left:798.0px;top:1846.5px;width:79.3px;height:79.2px;background:#fff;border:1.5px solid #d6dae6;border-radius:20px"></div><svg class="a" style="left:820.0px;top:1868.0px;" width="36.0" height="36.0" viewBox="0 0 24 24" fill="none"><g stroke="#6b7280" stroke-width="2.1" stroke-linecap="round" stroke-linejoin="round"><circle cx="12" cy="12" r="10"/><path d="M9.09 9a3 3 0 0 1 5.83 1c0 2-3 3-3 3"/><path d="M12 17h.01"/></g></svg><div class="a" style="left:3070.0px;top:1624.0px;width:404.0px;height:303.8px;background:#cdcfcf;border:2px solid #e3e7ee;border-radius:14px"></div><div class="a" style="left:3084.5px;top:1665.7px;width:374.9px;height:220.5px;background:#fff"></div><div class="a" style="left:3108.0px;top:1690.6px;width:58.0px;height:25.0px;background:#8b5cf6;border-radius:2px"></div><div class="a" style="left:3193.0px;top:1701.4px;width:58.0px;height:25.0px;background:#8b5cf6;border-radius:2px"></div><div class="a" style="left:3200.0px;top:1747.8px;width:58.0px;height:25.0px;background:#8b5cf6;border-radius:2px"></div><div class="a" style="left:3279.5px;top:1754.0px;width:58.0px;height:25.0px;background:#8b5cf6;border-radius:2px"></div><div class="a" style="left:3339.0px;top:1800.5px;width:58.0px;height:25.0px;background:#8b5cf6;border-radius:2px"></div>
</body></html>
